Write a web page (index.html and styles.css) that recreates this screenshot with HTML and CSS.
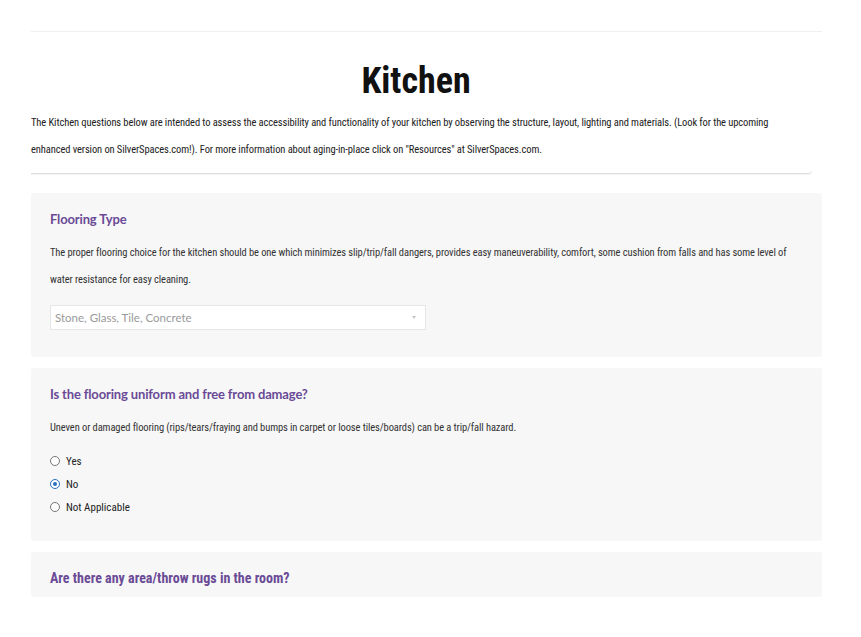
FILE: index.html
```html
<!DOCTYPE html>
<html lang="en">
<head>
  <meta charset="UTF-8" />
  <meta name="viewport" content="width=device-width, initial-scale=1.0"/>
  <title>Kitchen</title>
  <link rel="stylesheet" href="styles.css">
</head>
<body>
  <div class="page">
    <header class="intro">
      <h1>Kitchen</h1>
      <p>The Kitchen questions below are intended to assess the accessibility and functionality of your kitchen by observing the structure, layout, lighting and materials. (Look for the upcoming enhanced version on SilverSpaces.com!). For more information about aging-in-place click on "Resources" at SilverSpaces.com.</p>
    </header>

    <section class="card">
      <h3>Flooring Type</h3>
      <p>The proper flooring choice for the kitchen should be one which minimizes slip/trip/fall dangers, provides easy maneuverability, comfort, some cushion from falls and has some level of water resistance for easy cleaning.</p>
      <div class="select">
        <span>Stone, Glass, Tile, Concrete</span>
        <span class="caret"></span>
      </div>
    </section>

    <section class="card">
      <h3>Is the flooring uniform and free from damage?</h3>
      <p class="hint">Uneven or damaged flooring (rips/tears/fraying and bumps in carpet or loose tiles/boards) can be a trip/fall hazard.</p>
      <ul class="choices">
        <li><span class="radio"></span>Yes</li>
        <li><span class="radio on"></span>No</li>
        <li><span class="radio"></span>Not Applicable</li>
      </ul>
    </section>

    <section class="card last">
      <h3 class="narrow">Are there any area/throw rugs in the room?</h3>
    </section>
  </div>
</body>
</html>
```

FILE: styles.css
```css
body { margin: 0; background: #fff; font-family: "Roboto Condensed", "Liberation Sans", sans-serif; color: #333; }
.page { width: 791px; margin: 0 0 0 31px; padding-top: 31px; }
.intro { border-top: 1px solid #efefef; padding-top: 29px; margin-bottom: 19px; }
.intro h1 { font-size: 36px; font-weight: bold; text-align: center; margin: 0 0 8px; padding-right: 21px; color: #111; line-height: 40px; }
.intro p { font-size: 10.5px; letter-spacing: -0.1px; line-height: 27px; margin: 0 10px 0 0; padding: 0 20px 10px 0; border-bottom: 1px solid #ddd; border-radius: 0 0 4px 0; box-shadow: 0 1px 1px rgba(0,0,0,0.05); color: #222; }
.card { background: #f7f7f7; padding: 17px 19px 27px; margin-bottom: 11px; border-radius: 2px; }
.card h3 { font-family: Lato, "Noto Sans", sans-serif; font-size: 13px; letter-spacing: -0.15px; font-weight: bold; color: #6a4a96; margin: 0 0 10.5px; line-height: 18px; }
.card p { font-size: 10.5px; letter-spacing: -0.1px; line-height: 27px; margin: 0 0 12.5px; color: #333; }
.card p.hint { margin-bottom: 9px; }
.select { width: 376px; height: 25px; background: #fff; border: 1px solid #e6e6e6; display: flex; align-items: center; justify-content: space-between; padding: 0 9px 0 4px; box-sizing: border-box; color: #9a9a9a; font-family: Lato, sans-serif; font-size: 11.5px; }
.caret { width: 0; height: 0; border-left: 2.5px solid transparent; border-right: 2.5px solid transparent; border-top: 3px solid #c4c4c4; }
.choices { list-style: none; margin: 0 0 -4.5px; padding: 0; }
.choices li { display: flex; align-items: center; font-size: 11px; height: 23px; color: #222; }
.radio { width: 8px; height: 8px; border: 1px solid #777; border-radius: 50%; margin: 0 6px 0 0; background: #fff; position: relative; }
.radio.on { border-color: #2a6ebf; }
.radio.on::after { content: ""; position: absolute; left: 2px; top: 2px; width: 4px; height: 4px; border-radius: 50%; background: #2a6ebf; }
.card.last { height: 45px; padding: 17px 19px 0; box-sizing: border-box; margin-bottom: 0; }
.card h3.narrow { font-family: "Roboto Condensed", sans-serif; font-size: 14px; letter-spacing: 0; }
```
